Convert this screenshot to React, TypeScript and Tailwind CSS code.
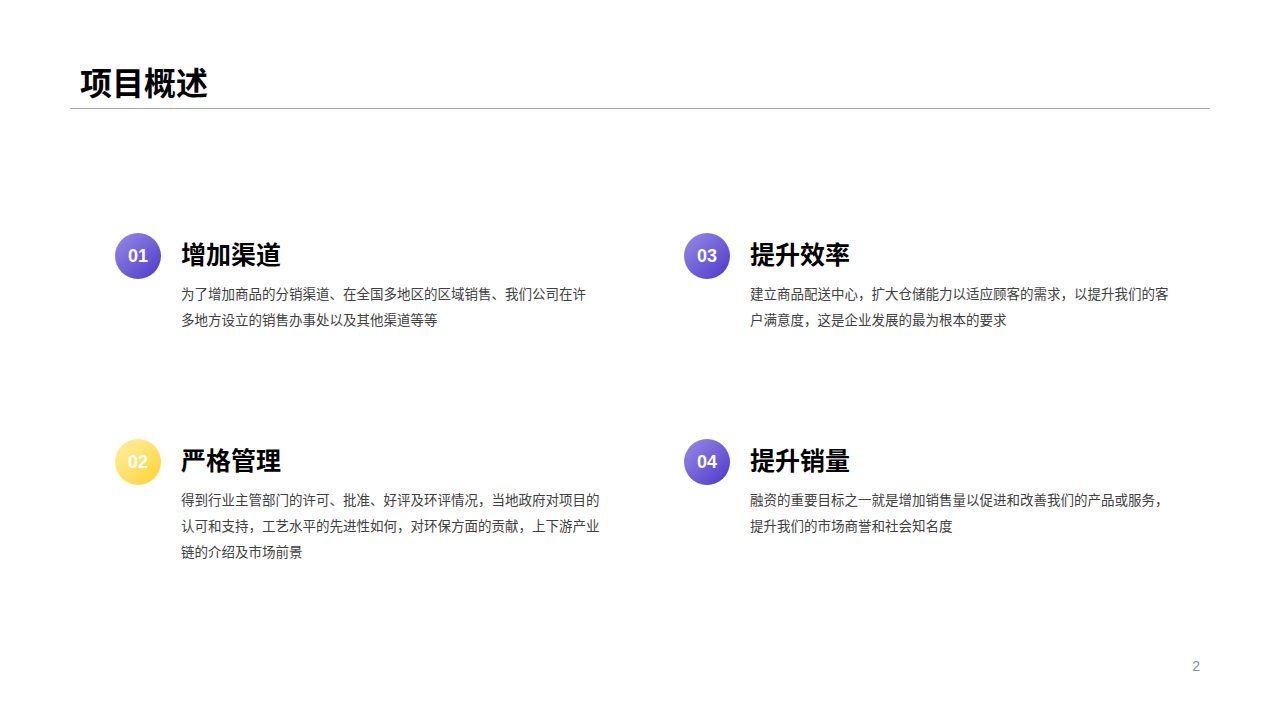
const items = [
  { n: "01", t: "增加渠道", d: "为了增加商品的分销渠道、在全国多地区的区域销售、我们公司在许多地方设立的销售办事处以及其他渠道等等", y: false, w: "w-[412px]" },
  { n: "03", t: "提升效率", d: "建立商品配送中心，扩大仓储能力以适应顾客的需求，以提升我们的客户满意度，这是企业发展的最为根本的要求", y: false, w: "w-[424px]" },
  { n: "02", t: "严格管理", d: "得到行业主管部门的许可、批准、好评及环评情况，当地政府对项目的认可和支持，工艺水平的先进性如何，对环保方面的贡献，上下游产业链的介绍及市场前景", y: true, w: "w-[424px]" },
  { n: "04", t: "提升销量", d: "融资的重要目标之一就是增加销售量以促进和改善我们的产品或服务，提升我们的市场商誉和社会知名度", y: false, w: "w-[424px]" },
];

export default function App() {
  return (
    <div className="w-[1280px] h-[720px] bg-white relative overflow-hidden" style={{ fontFamily: '"Liberation Sans", "Noto Sans CJK SC", sans-serif' }}>
      <div className="pt-[64px] px-[70px]">
        <div className="pl-[10px] text-[32px] font-bold text-black leading-[40px] h-[44px]">项目概述</div>
        <div className="h-px bg-[#a6a6a6]"></div>
      </div>
      <div className="grid grid-cols-[569px_1fr] pl-[115px] pt-[124px] gap-y-[104px]">
        {items.map((it) => (
          <div key={it.n} className="flex gap-[20px] h-[102px]">
            <div className={`w-[46px] h-[46px] rounded-full shrink-0 flex items-center justify-center text-white font-bold text-[18px] ${it.y ? "bg-gradient-to-br from-[#fff0a0] to-[#ffd200]" : "bg-gradient-to-br from-[#9a8ae6] to-[#4f33c9]"}`}>{it.n}</div>
            <div className={it.w}>
              <div className="text-[25px] font-bold text-black leading-[44px] h-[46px]">{it.t}</div>
              <div className="text-[13.5px] text-[#404040] leading-[26px] mt-[3px]">{it.d}</div>
            </div>
          </div>
        ))}
      </div>
      <div className="absolute right-[80px] top-[656px] text-[14px] text-[#8c8c8c]">2</div>
    </div>
  );
}
